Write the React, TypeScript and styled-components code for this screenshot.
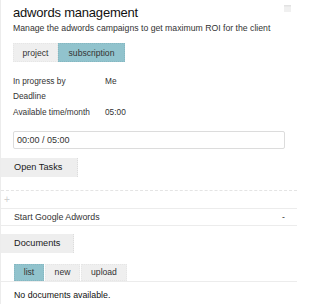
import React from 'react';
import styled, { createGlobalStyle } from 'styled-components';

const GlobalStyle = createGlobalStyle`
  body {
    margin: 0;
    background: #fff;
    font-family: 'Liberation Sans', Arial, sans-serif;
    color: #222;
  }
`;

const Panel = styled.div`
  width: 297px;
  height: 304px;
  border-left: 1px solid #ececec;
  box-sizing: border-box;
  position: relative;
`;

const Header = styled.div`
  padding: 5px 12px 0 12px;
`;

const Title = styled.h1`
  margin: 0;
  font-size: 13px;
  line-height: 15px;
  font-weight: normal;
  color: #111;
  letter-spacing: -0.2px;
`;

const Subtitle = styled.p`
  margin: 2px 0 0;
  font-size: 8.7px;
  line-height: 12px;
  color: #333;
`;

const CornerIcon = styled.svg`
  position: absolute;
  top: 5px;
  right: 6px;
`;

const TabRow = styled.div<{ top: number }>`
  display: flex;
  margin-top: ${(p) => p.top}px;
`;

const Tab = styled.div<{ active?: boolean; width: number; height: number }>`
  width: ${(p) => p.width}px;
  height: ${(p) => p.height}px;
  box-sizing: border-box;
  display: flex;
  align-items: center;
  justify-content: center;
  font-size: 8.6px;
  color: #333;
  background: ${(p) => (p.active ? '#91c3cd' : '#efefef')};
  border: 1px dotted ${(p) => (p.active ? '#86b7c1' : '#e6e6e6')};
`;

const InfoList = styled.div`
  margin-top: 11px;
`;

const InfoRow = styled.div`
  display: grid;
  grid-template-columns: 92px 1fr;
  height: 15.5px;
  align-items: center;
  font-size: 8.3px;
  color: #333;
`;

const TimeInput = styled.div`
  margin-top: 11px;
  height: 18px;
  box-sizing: border-box;
  border: 1px solid #dcdcdc;
  border-radius: 2px;
  display: flex;
  align-items: center;
  padding-left: 3px;
  font-size: 9px;
  color: #333;
`;

const SectionHeader = styled.div<{ width: number; top: number }>`
  width: ${(p) => p.width}px;
  height: 19px;
  margin-top: ${(p) => p.top}px;
  box-sizing: border-box;
  background: #eeeeee;
  border-right: 1px dotted #dcdcdc;
  display: flex;
  align-items: center;
  padding-left: 13px;
  font-size: 9.2px;
  color: #1a1a1a;
`;

const TaskList = styled.div`
  margin-top: 13px;
  border-top: 1px dashed #e4e4e4;
`;

const AddRow = styled.div`
  height: 17px;
  border-bottom: 1px solid #ececec;
  display: flex;
  align-items: center;
  padding-left: 3px;
  color: #d0d0d0;
  font-size: 10px;
`;

const TaskRow = styled.div`
  height: 16px;
  border-bottom: 1px solid #ececec;
  display: flex;
  align-items: center;
  justify-content: space-between;
  padding: 0 12px 0 13px;
  font-size: 8.8px;
  color: #333;
`;

const DocTabs = styled.div`
  margin-top: 11px;
  padding-left: 13px;
  display: flex;
  gap: 1px;
  border-bottom: 1px solid #ececec;
`;

const Empty = styled.div`
  padding: 8px 0 0 13px;
  font-size: 8.8px;
  color: #111;
`;

export default function App() {
  return (
    <>
      <GlobalStyle />
      <Panel>
        <CornerIcon width="7" height="7" viewBox="0 0 7 7">
          <rect x="0" y="0" width="7" height="7" fill="#f0f0f0" />
          <rect x="0" y="0" width="7" height="1.5" fill="#e2e2e2" />
        </CornerIcon>
        <Header>
          <Title>adwords management</Title>
          <Subtitle>Manage the adwords campaigns to get maximum ROI for the client</Subtitle>
          <TabRow top={9}>
            <Tab width={45} height={19}>project</Tab>
            <Tab width={67} height={19} active>
              subscription
            </Tab>
          </TabRow>
          <InfoList>
            <InfoRow>
              <span>In progress by</span>
              <span>Me</span>
            </InfoRow>
            <InfoRow>
              <span>Deadline</span>
              <span />
            </InfoRow>
            <InfoRow>
              <span>Available time/month</span>
              <span>05:00</span>
            </InfoRow>
          </InfoList>
          <TimeInput>00:00 / 05:00</TimeInput>
        </Header>
        <SectionHeader width={77} top={9}>
          Open Tasks
        </SectionHeader>
        <TaskList>
          <AddRow>+</AddRow>
          <TaskRow>
            <span>Start Google Adwords</span>
            <span>-</span>
          </TaskRow>
        </TaskList>
        <SectionHeader width={73} top={8}>
          Documents
        </SectionHeader>
        <DocTabs>
          <Tab width={30} height={17} active>
            list
          </Tab>
          <Tab width={35} height={17}>new</Tab>
          <Tab width={46} height={17}>upload</Tab>
        </DocTabs>
        <Empty>No documents available.</Empty>
      </Panel>
    </>
  );
}
